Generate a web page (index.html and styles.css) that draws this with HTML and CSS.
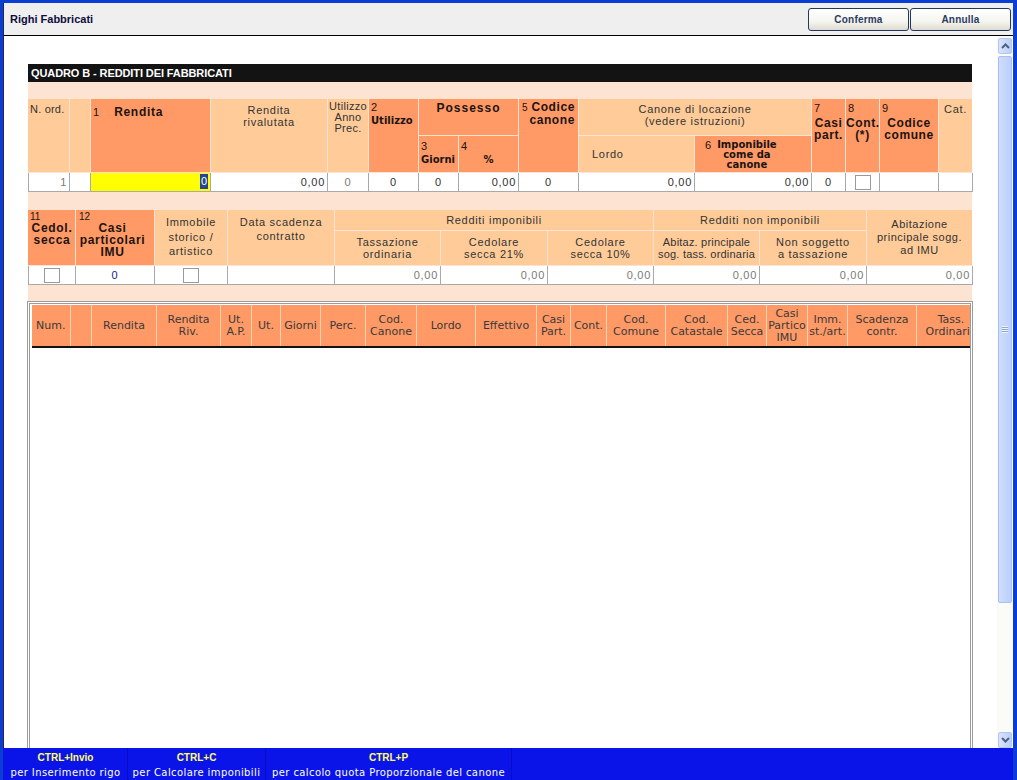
FILE: index.html
```html
<!DOCTYPE html>
<html lang="it">
<head>
<meta charset="utf-8">
<title>Righi Fabbricati</title>
<link rel="stylesheet" href="styles.css">
</head>
<body>
<div class="window">
  <div class="titlebar">
    <span class="title">Righi Fabbricati</span>
    <div class="buttons">
      <button class="btn">Conferma</button>
      <button class="btn">Annulla</button>
    </div>
  </div>
  <div class="main">
    <div class="content">
      <div class="quadro">
        <div class="quadro-title">QUADRO B - REDDITI DEI FABBRICATI</div>
        <div class="quadro-body">
          <div class="t1">
            <div class="lt c-nord">N. ord.</div>
            <div class="lt c-empty"></div>
            <div class="dk c-rendita"><span class="n">1</span><span class="b12 rendita-lbl">Rendita</span></div>
            <div class="lt c-riv">Rendita<br>rivalutata</div>
            <div class="lt c-uap">Utilizzo<br>Anno<br>Prec.</div>
            <div class="dk c-util"><div class="n">2</div><div class="t10">Utilizzo</div></div>
            <div class="dk c-poss b12">Possesso</div>
            <div class="dk c-giorni"><div class="n">3</div><div class="t10">Giorni</div></div>
            <div class="dk c-perc"><div class="n">4</div><div class="t10 center">%</div></div>
            <div class="dk c-codcan"><div><span class="n5">5</span> <span class="b12">Codice</span></div><div class="b12">canone</div></div>
            <div class="lt c-canone">Canone di locazione<br>(vedere istruzioni)</div>
            <div class="lt c-lordo">Lordo</div>
            <div class="dk c-impon"><span class="n">6</span><span class="t10 impon-txt">Imponibile<br>come da<br>canone</span></div>
            <div class="dk c-casi stack"><div class="n">7</div><div class="b12 center">Casi<br>part.</div></div>
            <div class="dk c-cont stack"><div class="n">8</div><div class="b12 center">Cont.<br>(*)</div></div>
            <div class="dk c-codcom stack"><div class="n">9</div><div class="b12 center">Codice<br>comune</div></div>
            <div class="lt c-cat">Cat.</div>

            <div class="wh first r gray">1</div>
            <div class="wh"></div>
            <div class="wh yellow r"><span class="sel">0</span></div>
            <div class="wh r">0,00</div>
            <div class="wh center gray">0</div>
            <div class="wh center">0</div>
            <div class="wh center">0</div>
            <div class="wh r">0,00</div>
            <div class="wh center">0</div>
            <div class="wh r">0,00</div>
            <div class="wh r">0,00</div>
            <div class="wh center">0</div>
            <div class="wh boxcell"><span class="chk"></span></div>
            <div class="wh"></div>
            <div class="wh"></div>
          </div>

          <div class="t2">
            <div class="dk d-cedol"><div class="n10">11</div><div class="b12 center tight">Cedol.<br>secca</div></div>
            <div class="dk d-casi"><div class="n10">12</div><div class="b12 center tight">Casi<br>particolari<br>IMU</div></div>
            <div class="lt d-imm">Immobile<br>storico /<br>artistico</div>
            <div class="lt d-data">Data scadenza<br>contratto</div>
            <div class="lt d-redimp mid">Redditi imponibili</div>
            <div class="lt d-tass mid">Tassazione<br>ordinaria</div>
            <div class="lt d-c21 mid">Cedolare<br>secca 21%</div>
            <div class="lt d-c10 mid">Cedolare<br>secca 10%</div>
            <div class="lt d-rednon mid">Redditi non imponibili</div>
            <div class="lt d-abz mid narrow">Abitaz. principale<br>sog. tass. ordinaria</div>
            <div class="lt d-nons mid">Non soggetto<br>a tassazione</div>
            <div class="lt d-abimu mid">Abitazione<br>principale sogg.<br>ad IMU</div>

            <div class="wh first boxcell"><span class="chk"></span></div>
            <div class="wh center navy">0</div>
            <div class="wh boxcell"><span class="chk"></span></div>
            <div class="wh"></div>
            <div class="wh r gray">0,00</div>
            <div class="wh r gray">0,00</div>
            <div class="wh r gray">0,00</div>
            <div class="wh r gray">0,00</div>
            <div class="wh r gray">0,00</div>
            <div class="wh r gray">0,00</div>
          </div>
        </div>
      </div>

      <div class="grid">
        <div class="gh-wrap">
          <div class="gh">
            <div class="left">Num.</div>
            <div></div>
            <div>Rendita</div>
            <div>Rendita<br>Riv.</div>
            <div>Ut.<br>A.P.</div>
            <div>Ut.</div>
            <div>Giorni</div>
            <div>Perc.</div>
            <div>Cod.<br>Canone</div>
            <div>Lordo</div>
            <div>Effettivo</div>
            <div>Casi<br>Part.</div>
            <div>Cont.</div>
            <div>Cod.<br>Comune</div>
            <div>Cod.<br>Catastale</div>
            <div>Ced.<br>Secca</div>
            <div>Casi<br>Partico<br>IMU</div>
            <div>Imm.<br>st./art.</div>
            <div>Scadenza<br>contr.</div>
            <div>Tass.<br>Ordinaria</div>
          </div>
        </div>
      </div>
    </div>

    <div class="scrollbar">
      <div class="sb-btn">
        <svg width="9" height="6" viewBox="0 0 9 6"><polyline points="1,5 4.5,1.5 8,5" fill="none" stroke="#4d6185" stroke-width="2"/></svg>
      </div>
      <div class="sb-thumb">
        <span class="grip"></span>
      </div>
      <div class="sb-track"></div>
      <div class="sb-btn">
        <svg width="9" height="6" viewBox="0 0 9 6"><polyline points="1,1 4.5,4.5 8,1" fill="none" stroke="#4d6185" stroke-width="2"/></svg>
      </div>
    </div>
  </div>

  <div class="footer">
    <div class="fgroup fg1"><span class="fkey">CTRL+Invio</span><span class="fdesc">per Inserimento rigo</span></div>
    <div class="fgroup fg2"><span class="fkey">CTRL+C</span><span class="fdesc">per Calcolare imponibili</span></div>
    <div class="fgroup fg3"><span class="fkey">CTRL+P</span><span class="fdesc">per calcolo quota Proporzionale del canone</span></div>
  </div>
</div>
</body>
</html>
```

FILE: styles.css
```css
* { box-sizing: border-box; }
html, body { margin: 0; padding: 0; }
body {
  width: 1017px;
  height: 780px;
  overflow: hidden;
  font-family: "Liberation Sans", Arial, sans-serif;
}

.window {
  width: 1017px;
  height: 780px;
  background: #0a3dd3;
  padding: 3px 4px 0 3px;
  display: flex;
  flex-direction: column;
}

/* ---------- title bar ---------- */
.titlebar {
  flex: none;
  height: 33px;
  background: #efefef;
  border-left: 1px solid #262648;
  border-bottom: 1px solid #000;
  display: flex;
  align-items: center;
  justify-content: space-between;
  padding: 0 2px 0 6px;
}
.title {
  font-weight: bold;
  font-size: 11px;
  color: #0d0d3c;
}
.buttons { display: flex; gap: 1px; }
.btn {
  width: 101px;
  height: 23px;
  padding: 0;
  border: 1px solid #26375c;
  border-radius: 3px;
  background: linear-gradient(#ffffff, #f5f5f0 60%, #dedacf);
  font: bold 10px "Liberation Sans", Arial, sans-serif;
  letter-spacing: 0.2px;
  color: #2b3c60;
}

/* ---------- main area ---------- */
.main {
  flex: none;
  height: 712px;
  display: flex;
  background: #fff;
  border-left: 1px solid #262648;
}
.content {
  flex: 1;
  overflow: hidden;
  padding: 28px 0 0 24px;
}

.quadro { width: 944px; }
.quadro-title {
  height: 18px;
  background: #131313;
  color: #fff;
  font-weight: bold;
  font-size: 11px;
  line-height: 18px;
  padding-left: 3px;
  letter-spacing: -0.1px;
}
.quadro-body {
  background: #fde3d1;
  padding: 17px 0 17px;
}

.t1, .t2 {
  display: grid;
  gap: 1px;
  color: #333;
  font-size: 11px;
  letter-spacing: 0.7px;
}
.t1 {
  grid-template-columns: 41px 20px 119px 116px 40px 49px 39px 59px 59px 115px 116px 33px 33px 58px 33px;
  grid-template-rows: 36px 36px 18px;
}
.t2 {
  margin-top: 19px;
  grid-template-columns: 47px 78px 72px 106px 105px 106px 105px 105px 106px 105px;
  grid-template-rows: 20px 34px 18px;
}

.lt { background: #ffcc99; }
.dk { background: #ff9966; color: #1c1410; }
.center { text-align: center; }
.n { font-size: 11px; letter-spacing: 0; line-height: 13px; }
.n5 { font-size: 10px; letter-spacing: 0; }
.n10 { font-size: 10px; letter-spacing: 0; line-height: 10px; }
.b12 { font-weight: bold; font-size: 12px; letter-spacing: 0.7px; }
.t10 {
  font-family: "DejaVu Sans", Verdana, sans-serif;
  font-weight: bold;
  font-size: 10px;
  letter-spacing: 0;
  line-height: 13px;
}

/* table 1 header cells */
.c-nord { grid-column: 1; grid-row: 1 / 3; padding: 4px 2px; line-height: 13px; letter-spacing: 0.2px; white-space: nowrap; }
.c-empty { grid-column: 2; grid-row: 1 / 3; }
.c-rendita { grid-column: 3; grid-row: 1 / 3; padding: 6px 2px; line-height: 14px; }
.rendita-lbl { margin-left: 15px; }
.c-riv { grid-column: 4; grid-row: 1 / 3; text-align: center; padding-top: 5px; line-height: 12px; }
.c-uap { grid-column: 5; grid-row: 1 / 3; text-align: center; padding-top: 2px; line-height: 11px; letter-spacing: 0.3px; white-space: nowrap; overflow: visible; }
.c-util { grid-column: 6; grid-row: 1 / 3; padding: 2px 2px; }
.c-poss { grid-column: 7 / 9; grid-row: 1; text-align: center; padding-top: 2px; line-height: 14px; letter-spacing: 1px; }
.c-giorni { grid-column: 7; grid-row: 2; padding: 4px 2px 0; }
.c-perc { grid-column: 8; grid-row: 2; padding: 4px 2px 0; }
.c-codcan { grid-column: 9; grid-row: 1 / 3; text-align: right; padding: 2px 3px 0 0; line-height: 13px; white-space: nowrap; }
.c-codcan .b12 { letter-spacing: 0.6px; }
.c-canone { grid-column: 10 / 12; grid-row: 1; text-align: center; padding-top: 4px; line-height: 12px; }
.c-lordo { grid-column: 10; grid-row: 2; display: flex; align-items: center; padding-left: 13px; }
.c-impon { grid-column: 11; grid-row: 2; display: flex; align-items: flex-start; padding: 4px 0 0 10px; }
.c-impon .n { line-height: 10px; }
.impon-txt { margin-left: 6px; text-align: center; line-height: 10px; }
.c-casi { grid-column: 12; grid-row: 1 / 3; }
.c-cont { grid-column: 13; grid-row: 1 / 3; }
.c-codcom { grid-column: 14; grid-row: 1 / 3; }
.stack { padding: 1px 0 0 2px; }
.stack .n { line-height: 17px; }
.stack .b12 { line-height: 12px; letter-spacing: 0.6px; margin-left: -2px; }
.c-cat { grid-column: 15; grid-row: 1 / 3; text-align: center; padding-top: 4px; line-height: 13px; }

/* data cells */
.wh {
  background: #fff;
  line-height: 18px;
  box-shadow: 1px 0 0 #a9a9a9, 0 1px 0 #a9a9a9, 1px 1px 0 #a9a9a9;
  color: #333;
}
.wh.first { border-left: 1px solid #a9a9a9; }
.r { text-align: right; padding-right: 2px; }
.gray { color: #7a7a7a; }
.navy { color: #1b1b8a; }
.yellow { background: #ffff00; }
.sel {
  display: inline-block;
  height: 15px;
  line-height: 15px;
  margin-top: 1px;
  padding: 0 1px;
  background: #24478f;
  color: #fff;
  vertical-align: top;
  letter-spacing: 0;
}
.boxcell { display: flex; align-items: center; justify-content: center; }
.chk {
  width: 16px;
  height: 15px;
  background: #fff;
  border: 1px solid #9a9a9a;
}

/* table 2 header cells */
.tight { line-height: 12px; }
.d-cedol { grid-column: 1; grid-row: 1 / 3; padding: 2px 1px 0 2px; }
.d-casi { grid-column: 2; grid-row: 1 / 3; padding: 2px 8px 0 3px; }
.d-imm { grid-column: 3; grid-row: 1 / 3; text-align: center; padding-top: 5px; line-height: 14.5px; }
.d-data { grid-column: 4; grid-row: 1 / 3; text-align: center; padding-top: 5px; line-height: 14px; }
.mid { display: flex; align-items: center; justify-content: center; text-align: center; line-height: 12px; }
.d-redimp { grid-column: 5 / 8; grid-row: 1; }
.d-tass { grid-column: 5; grid-row: 2; }
.d-c21 { grid-column: 6; grid-row: 2; }
.d-c10 { grid-column: 7; grid-row: 2; }
.d-rednon { grid-column: 8 / 10; grid-row: 1; }
.d-abz { grid-column: 8; grid-row: 2; }
.narrow { letter-spacing: 0.2px; white-space: nowrap; }
.d-nons { grid-column: 9; grid-row: 2; }
.d-abimu { grid-column: 10; grid-row: 1 / 3; line-height: 13px; letter-spacing: 0.5px; }

/* ---------- lower grid ---------- */
.grid {
  margin-left: -1px;
  width: 946px;
  height: 470px;
  border: 3px double #9c9c9c;
  padding: 1px 0 0 2px;
  background: #fff;
}
.gh-wrap {
  width: 938px;
  overflow: hidden;
  border-bottom: 2px solid #111;
}
.gh {
  display: grid;
  grid-template-columns: 38px 20px 64px 63px 30px 28px 39px 44px 50px 58px 60px 33px 35px 58px 61px 38px 40px 39px 68px 68px;
  column-gap: 1px;
  width: max-content;
  height: 41px;
  background: #ffd2b0;
}
.gh > div {
  background: #ff9966;
  display: flex;
  align-items: center;
  justify-content: center;
  text-align: center;
  font-family: "DejaVu Sans", Verdana, sans-serif;
  font-size: 11px;
  line-height: 12px;
  color: #3a3a3a;
}
.gh > div.left { justify-content: flex-start; padding-left: 4px; }

/* ---------- scrollbar ---------- */
.scrollbar {
  flex: none;
  width: 16px;
  background: #fbfbf7;
  display: flex;
  flex-direction: column;
  padding-top: 2px;
}
.sb-btn {
  flex: none;
  height: 16px;
  margin: 0 1px;
  border: 1px solid #b3c6f2;
  border-radius: 2px;
  background: linear-gradient(to right, #dae4fd, #bccdf8);
  display: flex;
  align-items: center;
  justify-content: center;
}
.sb-thumb {
  flex: none;
  height: 547px;
  margin: 2px 1px 0;
  border: 1px solid #a9bff2;
  border-radius: 2px;
  background: linear-gradient(to right, #cfdcfd, #bcd0fb);
  display: flex;
  align-items: center;
  justify-content: center;
}
.grip {
  width: 6px;
  height: 7px;
  background: repeating-linear-gradient(#eef3ff 0 1px, #8ea5d8 1px 2px);
}
.sb-track { flex: 1; }

/* ---------- footer ---------- */
.footer {
  flex: 1;
  display: flex;
  background: #0b14e8;
  padding-left: 1px;
}
.fgroup {
  display: flex;
  flex-direction: column;
  align-items: center;
  padding-top: 2px;
  border-right: 1px solid #0a0cc4;
}
.fg1 { width: 124px; }
.fg2 { width: 138px; }
.fg3 { width: 246px; }
.fkey {
  font: bold 10px/15px "Liberation Sans", Arial, sans-serif;
  color: #ffff66;
}
.fdesc {
  font: 10px/15px "DejaVu Sans", Verdana, sans-serif;
  letter-spacing: 0.4px;
  color: #fff;
  white-space: nowrap;
}
```
